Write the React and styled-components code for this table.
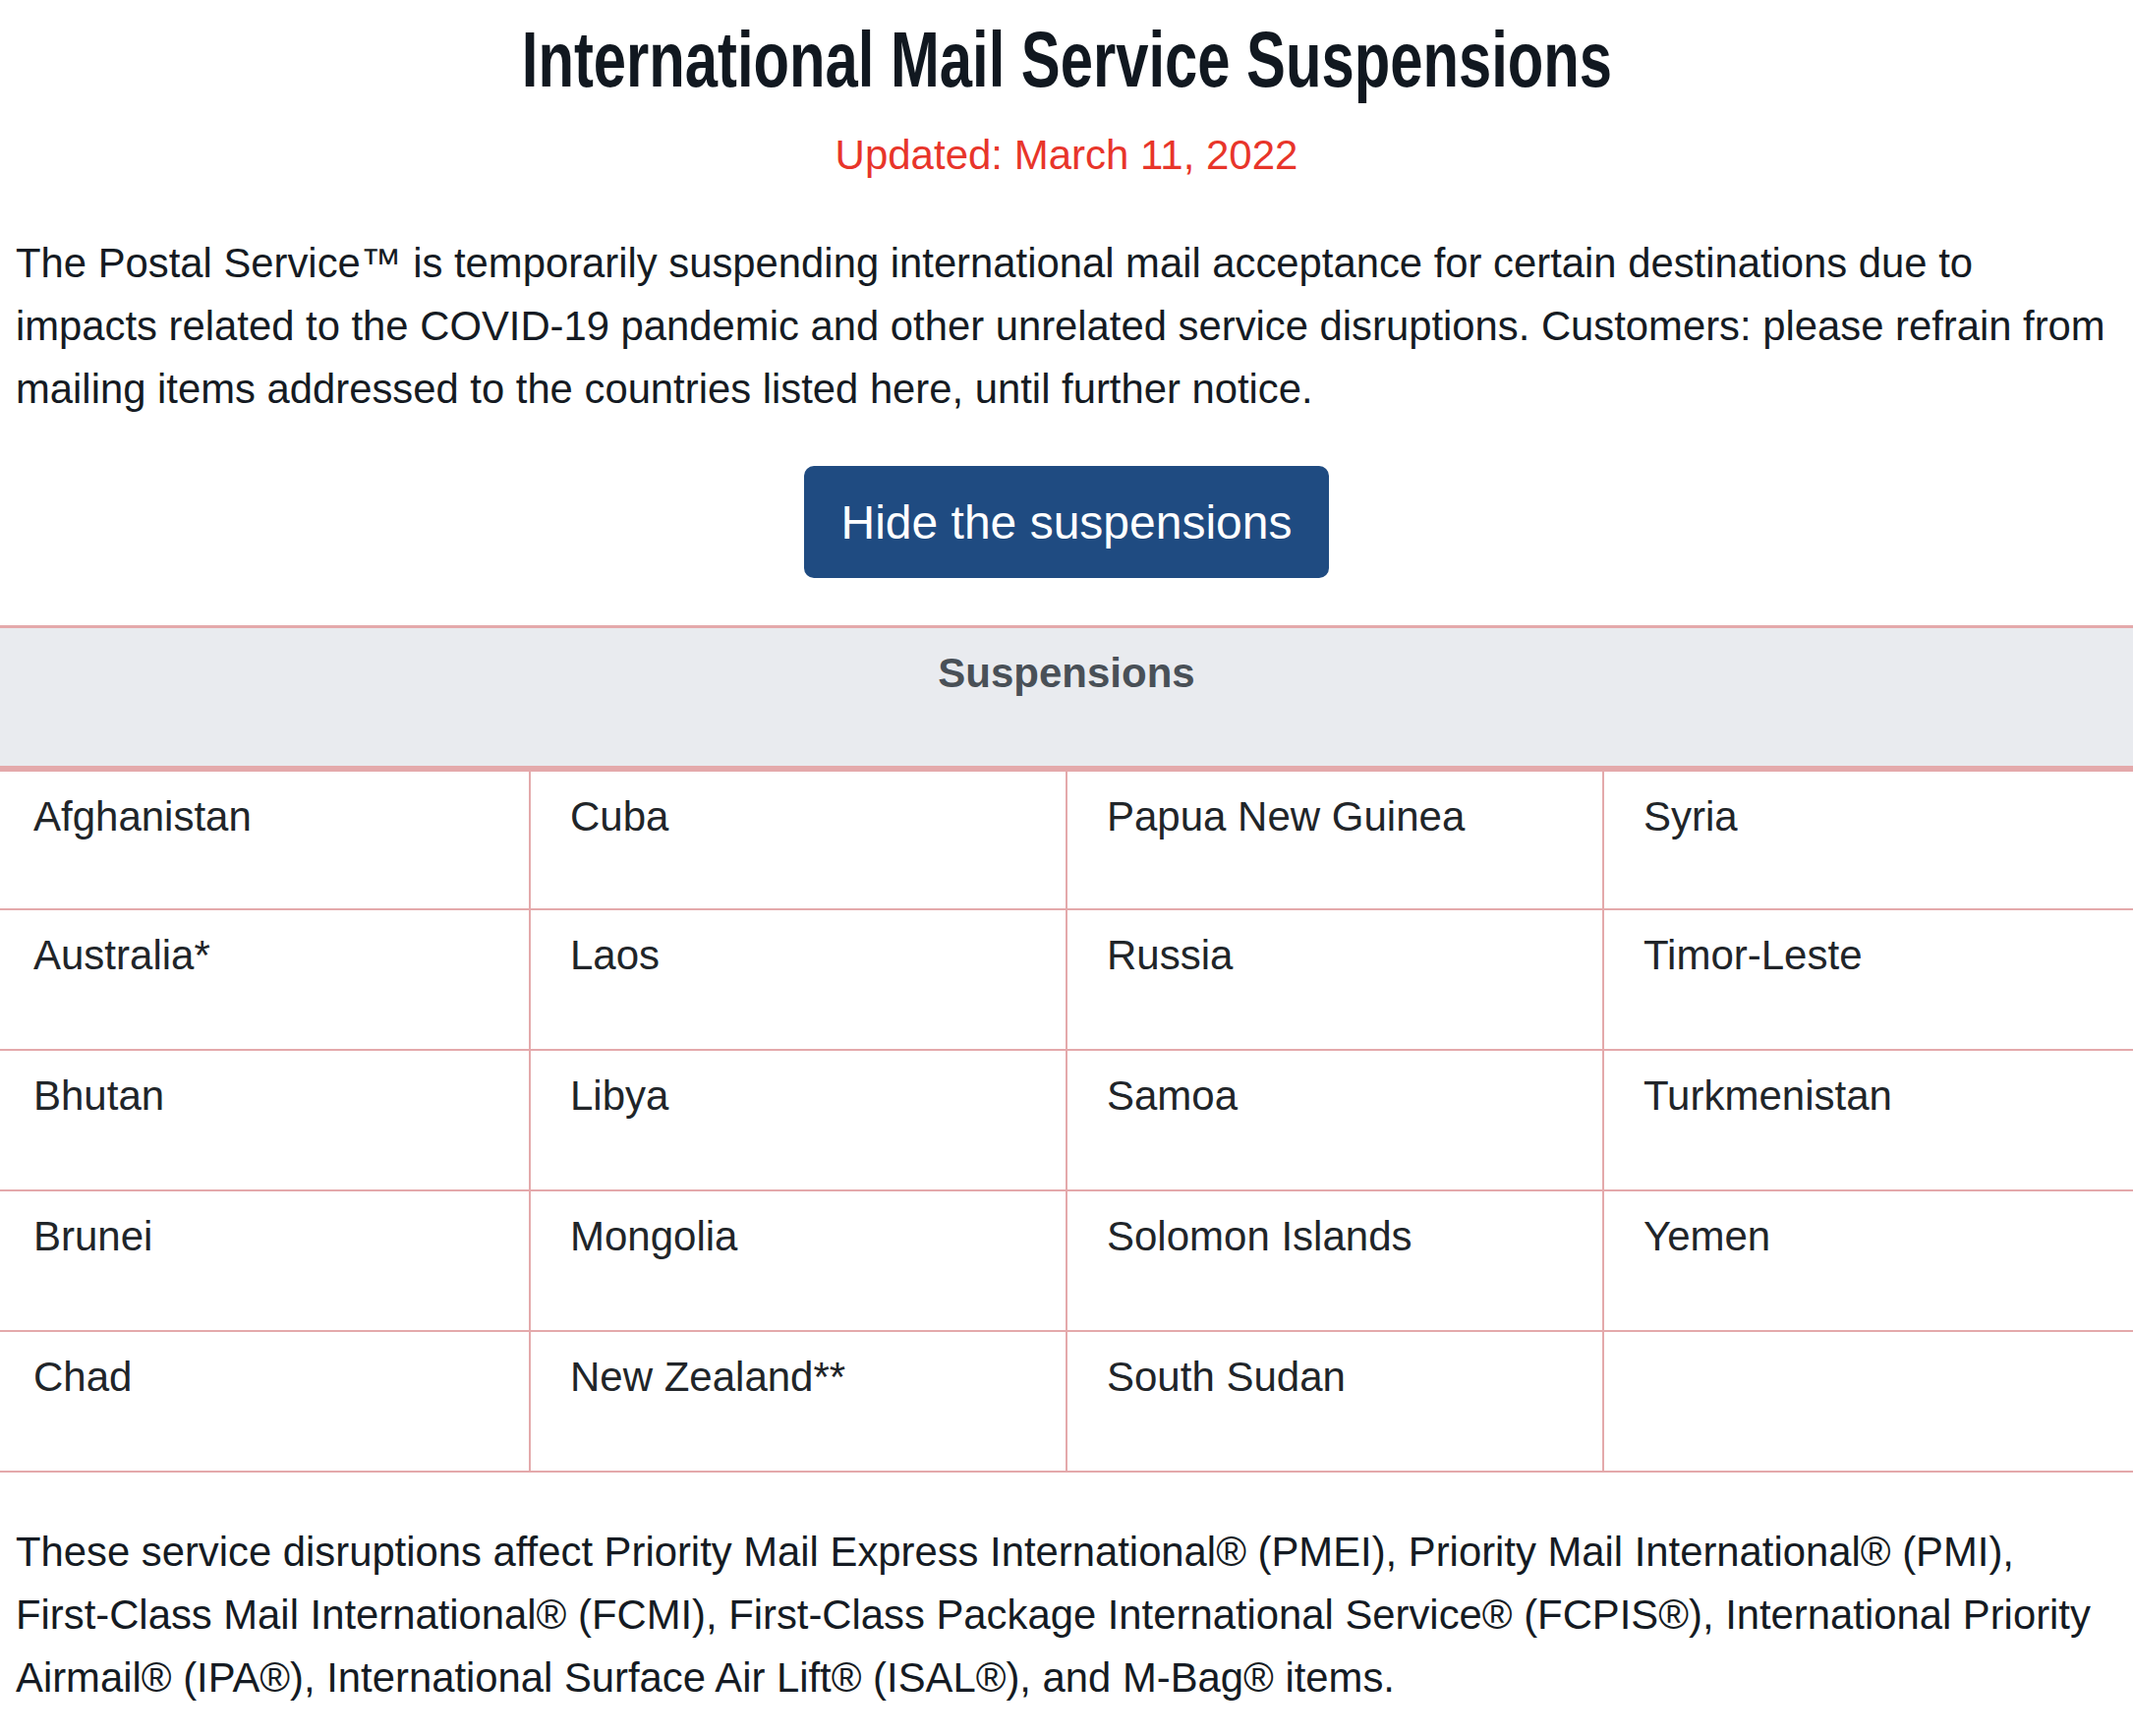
import React from "react";
import styled, { createGlobalStyle } from "styled-components";

const GlobalStyle = createGlobalStyle`
  html, body {
    margin: 0;
    padding: 0;
    background: #ffffff;
    overflow-x: hidden;
  }
  body {
    font-family: "Liberation Sans", Arial, Helvetica, sans-serif;
    color: #151b23;
  }
`;

const Page = styled.div`
  width: 100%;
  display: flex;
  flex-direction: column;
`;

const Title = styled.h1`
  margin: 11px 0 0;
  font-family: "Liberation Sans", Arial, sans-serif;
  font-weight: 700;
  font-size: 80px;
  line-height: 100px;
  text-align: center;
  color: #111820;
  white-space: nowrap;
`;

// no condensed face installed, so squeeze the bold one
const Condensed = styled.span`
  display: inline-block;
  transform: scaleX(0.747);
  transform-origin: center;
`;

const Updated = styled.p`
  margin: 15px 0 0;
  font-size: 42px;
  line-height: 64px;
  text-align: center;
  color: #e8352a;
`;

const Text = styled.p`
  margin: ${(p) => p.top}px 0 0;
  padding: 0 18px 0 16px;
  font-size: 41.8px;
  line-height: 64px;
  color: #151b23;
`;

const ButtonRow = styled.div`
  display: flex;
  justify-content: center;
  margin-top: 46px;
`;

const ToggleButton = styled.button`
  height: 114px;
  padding: 0 38px;
  border: none;
  border-radius: 10px;
  background: #1f4b81;
  color: #ffffff;
  font-family: "Liberation Sans", Arial, sans-serif;
  font-size: 48px;
  cursor: pointer;
`;

const Table = styled.table`
  width: calc(100% + 16px);
  margin: 48px -8px 0;
  border-collapse: collapse;
  table-layout: fixed;
`;

const HeadCell = styled.th`
  height: 124px;
  padding: 16px 0 0;
  vertical-align: top;
  background: #e9ebef;
  border-top: 3px solid #e4a9ab;
  border-bottom: 6px solid #e4a9ab;
  font-size: 42px;
  line-height: 60px;
  font-weight: 700;
  color: #495057;
`;

const Cell = styled.td`
  height: 143px;
  padding: 14px 40px 0;
  vertical-align: top;
  border: 2px solid #e4a9ab;
  border-top: none;
  font-size: 42px;
  line-height: 63px;
  color: #212529;
  box-sizing: border-box;
`;

const rows = [
  ["Afghanistan", "Cuba", "Papua New Guinea", "Syria"],
  ["Australia*", "Laos", "Russia", "Timor-Leste"],
  ["Bhutan", "Libya", "Samoa", "Turkmenistan"],
  ["Brunei", "Mongolia", "Solomon Islands", "Yemen"],
  ["Chad", "New Zealand**", "South Sudan", ""],
];

export default function App() {
  return (
    <Page>
      <GlobalStyle />
      <Title>
        <Condensed>International Mail Service Suspensions</Condensed>
      </Title>
      <Updated>Updated: March 11, 2022</Updated>
      <Text top={46}>
        The Postal Service™ is temporarily suspending international mail acceptance for certain
        destinations due to impacts related to the COVID-19 pandemic and other unrelated service
        disruptions. Customers: please refrain from mailing items addressed to the countries listed
        here, until further notice.
      </Text>
      <ButtonRow>
        <ToggleButton type="button">Hide the suspensions</ToggleButton>
      </ButtonRow>
      <Table>
        <thead>
          <tr>
            <HeadCell colSpan={4}>Suspensions</HeadCell>
          </tr>
        </thead>
        <tbody>
          {rows.map((r, i) => (
            <tr key={i}>
              {r.map((c, j) => (
                <Cell key={j}>{c}</Cell>
              ))}
            </tr>
          ))}
        </tbody>
      </Table>
      <Text top={49}>
        These service disruptions affect Priority Mail Express International® (PMEI), Priority Mail
        International® (PMI), First-Class Mail International® (FCMI), First-Class Package International
        Service® (FCPIS®), International Priority Airmail® (IPA®), International Surface Air Lift®
        (ISAL®), and M-Bag® items.
      </Text>
    </Page>
  );
}
